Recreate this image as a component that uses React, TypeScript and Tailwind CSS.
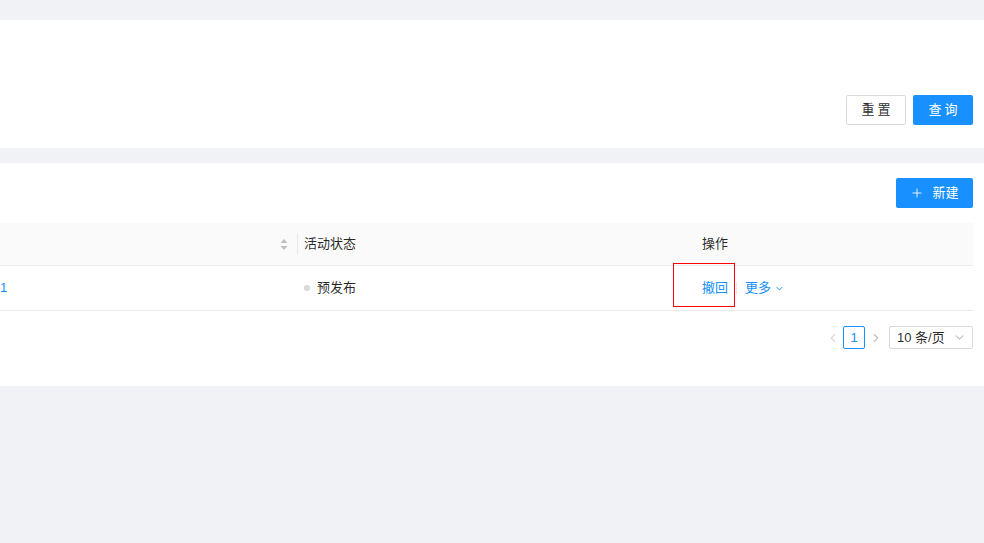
import { ChevronDown, ChevronLeft, ChevronRight, Plus } from "lucide-react";

const font = { fontFamily: '"Liberation Sans", "Noto Sans CJK SC", sans-serif' };

function SortIcon() {
  return (
    <svg width="8" height="13" viewBox="0 0 8 13" className="shrink-0">
      <path d="M4 1 L7.5 5 L0.5 5 Z" fill="#bfbfbf" />
      <path d="M4 12 L7.5 8 L0.5 8 Z" fill="#bfbfbf" />
    </svg>
  );
}

export default function App() {
  return (
    <div className="min-h-[543px] bg-[#f0f2f5] pt-[20px] text-[13px] text-[rgba(0,0,0,0.85)]" style={font}>
      {/* search panel */}
      <div className="h-[128px] bg-white flex items-end justify-end gap-[7px] pr-[11px] pb-[23px]">
        <button className="h-[30px] w-[60px] border border-[#d9d9d9] rounded-[2px] bg-white tracking-[3px] pl-[3px]">重置</button>
        <button className="h-[30px] w-[60px] rounded-[2px] bg-[#1890ff] text-white tracking-[3px] pl-[3px]">查询</button>
      </div>

      {/* table panel */}
      <div className="mt-[15px] h-[223px] bg-white pt-[15px] pr-[11px]">
        <div className="flex justify-end">
          <button className="h-[30px] w-[77px] rounded-[2px] bg-[#1890ff] text-white flex items-center justify-center gap-[8px]">
            <Plus size={14} strokeWidth={1.5} />
            <span>新建</span>
          </button>
        </div>

        <div className="mt-[15px] relative">
          {/* header */}
          <div className="h-[43px] bg-[#fafafa] border-b border-[#ebebeb] flex items-center">
            <div className="w-[297px] flex items-center justify-end pr-[9px]">
              <SortIcon />
            </div>
            <div className="w-[1px] h-[22px] bg-[#e8e8e8]" />
            <div className="w-[396px] pl-[6px]">活动状态</div>
            <div className="pl-[8px]">操作</div>
          </div>

          {/* row */}
          <div className="h-[45px] border-b border-[#ebebeb] flex items-center">
            <div className="w-[297px]">
              <span className="text-[#1890ff]">1</span>
            </div>
            <div className="w-[1px]" />
            <div className="w-[396px] pl-[6px] flex items-center gap-[7px]">
              <span className="w-[6px] h-[6px] rounded-full bg-[#d9d9d9]" />
              <span>预发布</span>
            </div>
            <div className="pl-[8px] flex items-center text-[#1890ff]">
              <span>撤回</span>
              <span className="mx-[8px] w-[1px] h-[13px] bg-[#e8e8e8]" />
              <span>更多</span>
              <ChevronDown size={11} className="ml-[3px]" />
            </div>
          </div>

          {/* highlight box */}
          <div className="absolute left-[673px] top-[40px] w-[62px] h-[44px] border border-[#ff0000] pointer-events-none" />
        </div>

        {/* pagination */}
        <div className="mt-[15px] flex justify-end items-center">
          <ChevronLeft size={14} className="text-[#d9d9d9] mr-[3px]" />
          <div className="w-[22px] h-[23px] border border-[#1890ff] rounded-[2px] text-[#1890ff] flex items-center justify-center">1</div>
          <ChevronRight size={14} className="text-[#bfbfbf] ml-[4px] mr-[6px]" />
          <div className="w-[84px] h-[23px] border border-[#d9d9d9] rounded-[2px] flex items-center justify-between pl-[7px] pr-[6px]">
            <span>10 条/页</span>
            <ChevronDown size={13} className="text-[#bfbfbf]" />
          </div>
        </div>
      </div>
    </div>
  );
}
